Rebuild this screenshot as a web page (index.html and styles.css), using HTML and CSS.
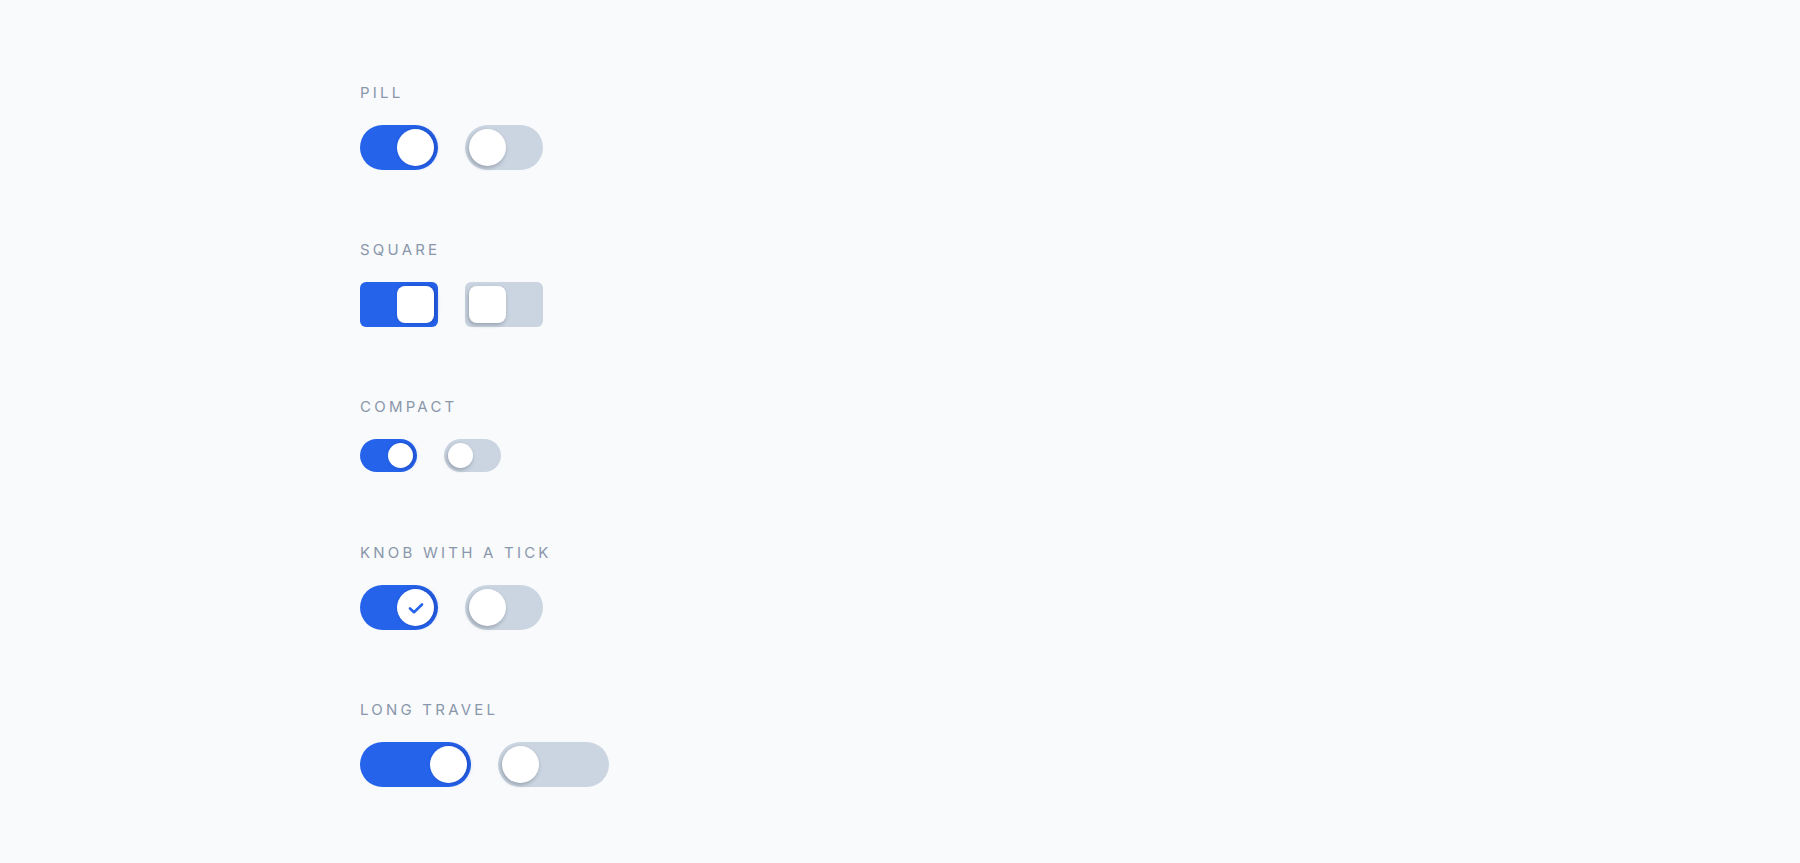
FILE: index.html
```html
<!DOCTYPE html>
<html lang="en">
<head>
  <meta charset="UTF-8">
  <meta name="viewport" content="width=device-width, initial-scale=1.0">
  <title>Toggle Switches</title>
  <link rel="stylesheet" href="styles.css">
</head>
<body>
  <div class="container">

    <div class="group">
      <div class="group-title">Pill</div>
      <div class="row">
        <label class="switch">
          <input type="checkbox" checked>
          <span class="track"><span class="knob"></span></span>
        </label>
        <label class="switch">
          <input type="checkbox">
          <span class="track"><span class="knob"></span></span>
        </label>
      </div>
    </div>

    <div class="group">
      <div class="group-title">Square</div>
      <div class="row">
        <label class="switch square">
          <input type="checkbox" checked>
          <span class="track"><span class="knob"></span></span>
        </label>
        <label class="switch square">
          <input type="checkbox">
          <span class="track"><span class="knob"></span></span>
        </label>
      </div>
    </div>

    <div class="group compact-group">
      <div class="group-title">Compact</div>
      <div class="row">
        <label class="switch compact">
          <input type="checkbox" checked>
          <span class="track"><span class="knob"></span></span>
        </label>
        <label class="switch compact">
          <input type="checkbox">
          <span class="track"><span class="knob"></span></span>
        </label>
      </div>
    </div>

    <div class="group">
      <div class="group-title">Knob with a tick</div>
      <div class="row">
        <label class="switch tick">
          <input type="checkbox" checked>
          <span class="track">
            <span class="knob">
              <svg class="check" width="16" height="16" viewBox="0 0 16 16"><polyline points="2,8.5 6,12.2 14,4.5"/></svg>
            </span>
          </span>
        </label>
        <label class="switch tick">
          <input type="checkbox">
          <span class="track">
            <span class="knob">
              <svg class="check" width="16" height="16" viewBox="0 0 16 16"><polyline points="2,8.5 6,12.2 14,4.5"/></svg>
            </span>
          </span>
        </label>
      </div>
    </div>

    <div class="group">
      <div class="group-title">Long travel</div>
      <div class="row">
        <label class="switch long">
          <input type="checkbox" checked>
          <span class="track"><span class="knob"></span></span>
        </label>
        <label class="switch long">
          <input type="checkbox">
          <span class="track"><span class="knob"></span></span>
        </label>
      </div>
    </div>

  </div>
</body>
</html>
```

FILE: styles.css
```css
body {
  margin: 0;
  background-color: #f8fafc;
  font-family: Inter, "Noto Sans", sans-serif;
}
.container {
  padding: 83px 360px 40px;
}
.group {
  margin-bottom: 70px;
}
.compact-group {
  margin-bottom: 71px;
}
.group-title {
  font-size: 15px;
  line-height: 20px;
  letter-spacing: 0.215em;
  text-transform: uppercase;
  color: #8a97ab;
  margin-bottom: 22px;
}
.row {
  display: flex;
  gap: 27px;
}

/* switch: hidden checkbox + track with a knob */
.switch {
  display: block;
  cursor: pointer;
}
.switch input {
  display: none;
}
.track {
  display: flex;
  align-items: center;
  box-sizing: border-box;
  width: 78px;
  height: 45px;
  padding: 4px;
  border-radius: 23px;
  background-color: #cbd5e1;
  transition: background-color 0.2s;
}
.knob {
  display: flex;
  align-items: center;
  justify-content: center;
  width: 37px;
  height: 37px;
  border-radius: 50%;
  background-color: #fff;
  box-shadow: -1px 2px 4px rgba(15, 23, 42, 0.28);
}
input:checked + .track {
  background-color: #2563eb;
  justify-content: flex-end;
}
input:checked + .track .knob {
  box-shadow: 2px 0 4px rgba(23, 55, 160, 0.55);
}

.square .track {
  border-radius: 6px;
}
.square .knob {
  border-radius: 8px;
}

.compact .track {
  width: 57px;
  height: 33px;
  border-radius: 17px;
}
.compact .knob {
  width: 25px;
  height: 25px;
}

.long .track {
  width: 111px;
}

.check {
  display: none;
  fill: none;
  stroke: #2563eb;
  stroke-width: 2.6;
  stroke-linecap: round;
  stroke-linejoin: round;
}
input:checked + .track .check {
  display: block;
}
```
